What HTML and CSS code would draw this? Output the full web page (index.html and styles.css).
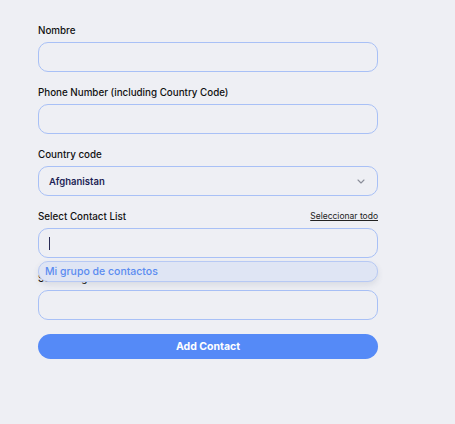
FILE: index.html
```html
<!DOCTYPE html>
<html>
<head>
<meta charset="utf-8">
<link rel="stylesheet" href="styles.css">
</head>
<body>
<form class="form">
  <div class="field">
    <label class="label">Nombre</label>
    <div class="input"></div>
  </div>
  <div class="field">
    <label class="label">Phone Number (including Country Code)</label>
    <div class="input"></div>
  </div>
  <div class="field">
    <label class="label">Country code</label>
    <div class="input select">
      <span class="select-value">Afghanistan</span>
      <svg class="chevron" width="8" height="5" viewBox="0 0 8 5"><path d="M1 1l3 3 3-3" fill="none" stroke="#8a8d99" stroke-width="1.1" stroke-linecap="round" stroke-linejoin="round"/></svg>
    </div>
  </div>
  <div class="field combo-field">
    <div class="label-row">
      <label class="label">Select Contact List</label>
      <a class="select-all">Seleccionar todo</a>
    </div>
    <div class="input focused"><span class="caret"></span></div>
    <div class="dropdown">Mi grupo de contactos</div>
  </div>
  <div class="field">
    <label class="label">Select Tag</label>
    <div class="input"></div>
  </div>
  <button type="button" class="submit">Add Contact</button>
</form>
</body>
</html>
```
FILE: styles.css
```css
* { box-sizing: border-box; }
html, body { margin: 0; padding: 0; }
body {
  background: #eeeff4;
  font-family: Inter, "Noto Sans", sans-serif;
  color: #111;
  width: 455px;
  height: 424px;
}
.form {
  width: 340px;
  margin-left: 38px;
  padding-top: 24px;
  display: flex;
  flex-direction: column;
}
.field {
  display: flex;
  flex-direction: column;
  margin-bottom: 14px;
}
.combo-field { position: relative; z-index: 2; }
.label {
  font-size: 9.8px;
  line-height: 13px;
  font-weight: 500;
  color: #111;
  margin-bottom: 5px;
}
.label-row {
  display: flex;
  justify-content: space-between;
  align-items: flex-start;
}
.select-all {
  font-size: 8.5px;
  line-height: 13px;
  color: #222;
  text-decoration: underline;
}
.input {
  height: 30px;
  border: 1px solid #a8c0f6;
  border-radius: 10px;
  background: #eeeff4;
  display: flex;
  align-items: center;
  padding: 0 10px;
}
.select { justify-content: space-between; }
.select-value {
  font-size: 9.5px;
  font-weight: 600;
  color: #1d1f55;
}
.chevron { margin-right: 2px; }
.caret {
  display: block;
  width: 1px;
  height: 13px;
  background: #2a2c55;
}
.dropdown {
  position: absolute;
  left: 0;
  right: 0;
  top: 51px;
  height: 21px;
  border: 1px solid #b7c9f4;
  border-radius: 10px;
  background: #dfe5f4;
  box-shadow: 0 3px 6px rgba(60, 70, 110, 0.12);
  color: #5b8cf0;
  font-size: 10.5px;
  font-weight: 500;
  line-height: 19px;
  padding-left: 6px;
}
.submit {
  height: 25px;
  border: none;
  border-radius: 13px;
  background: #558af7;
  color: #fff;
  font-family: Inter, "Noto Sans", sans-serif;
  font-size: 10.5px;
  font-weight: 700;
  cursor: pointer;
}
```
